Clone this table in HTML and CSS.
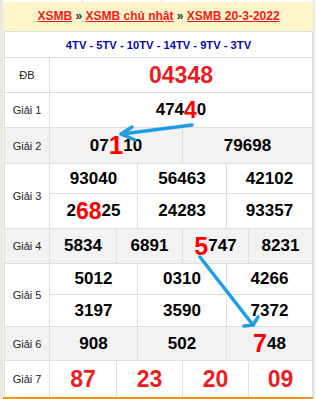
FILE: index.html
```html
<!DOCTYPE html>
<html lang="vi">
<head>
<meta charset="utf-8">
<title>XSMB 20-3-2022</title>
<link rel="stylesheet" href="styles.css">
</head>
<body>
<div class="page">
  <div class="prev"><span></span><span></span><span></span><span></span></div>
  <div class="box">
    <div class="title"><a href="#">XSMB</a> <span class="sep">»</span> <a href="#">XSMB chủ nhật</a> <span class="sep">»</span> <a href="#">XSMB 20-3-2022</a></div>
    <div class="grid">
      <div class="c codes">4TV - 5TV - 10TV - 14TV - 9TV - 3TV</div>

      <div class="c lbl r2">ĐB</div>
      <div class="c big s6">04348</div>

      <div class="c lbl r3">Giải 1</div>
      <div class="c num s6">474<span class="hl">4</span>0</div>

      <div class="c lbl alt r4">Giải 2</div>
      <div class="c num alt s3">07<span class="hl xl">1</span>10</div>
      <div class="c num alt s3">79698</div>

      <div class="c lbl r5">Giải 3</div>
      <div class="c num s2">93040</div>
      <div class="c num s2">56463</div>
      <div class="c num s2">42102</div>
      <div class="c num s2">2<span class="hl">68</span>25</div>
      <div class="c num s2">24283</div>
      <div class="c num s2">93357</div>

      <div class="c lbl alt r7">Giải 4</div>
      <div class="c num alt s1">5834</div>
      <div class="c num alt s2">6891</div>
      <div class="c num alt s2"><span class="hl lg">5</span>747</div>
      <div class="c num alt s1">8231</div>

      <div class="c lbl r8">Giải 5</div>
      <div class="c num s2">5012</div>
      <div class="c num s2">0310</div>
      <div class="c num s2">4266</div>
      <div class="c num s2">3197</div>
      <div class="c num s2">3590</div>
      <div class="c num s2">7372</div>

      <div class="c lbl alt r10">Giải 6</div>
      <div class="c num alt s2">908</div>
      <div class="c num alt s2">502</div>
      <div class="c num alt s2"><span class="hl lg">7</span>48</div>

      <div class="c lbl r11">Giải 7</div>
      <div class="c big s1">87</div>
      <div class="c big s2">23</div>
      <div class="c big s2">20</div>
      <div class="c big s1">09</div>
    </div>
  </div>
</div>
<svg class="arrows" width="316" height="399" viewBox="0 0 316 399" aria-hidden="true">
  <g stroke="#1e9de2" stroke-width="3.5" stroke-linecap="round" stroke-linejoin="round" fill="none">
    <line x1="192" y1="125" x2="122" y2="134"/>
    <polyline points="132,127 121,134 135,140"/>
    <line x1="200" y1="257" x2="253" y2="325"/>
    <polyline points="258,317 253,325 244,326"/>
  </g>
</svg>
</body>
</html>
```
FILE: styles.css
```css
html, body {
  margin: 0;
  padding: 0;
  background: #fff;
  font-family: "Liberation Sans", Arial, sans-serif;
}

.page {
  width: 310px;
  border-left: 3px solid #e8e8e8;
  border-right: 2px solid #e8e8e8;
}

.prev {
  height: 2px;
  display: flex;
  background: #fff;
}
.prev span {
  border-right: 1px solid #dddddd;
}
.prev span:nth-child(1) { width: 79px; }
.prev span:nth-child(2) { width: 78px; }
.prev span:nth-child(3) { width: 74px; }
.prev span:nth-child(4) { flex: 1; border-right: 0; }

.box {
  background: #fdf5c9;
  padding-left: 1px;
  border-bottom: 2px solid #f7941d;
}

.title {
  height: 29px;
  line-height: 29px;
  text-align: center;
  font-size: 12px;
  font-weight: bold;
  white-space: nowrap;
}
.title a {
  color: #ed1c24;
  text-decoration: underline;
}
.title .sep {
  color: #333;
}

.grid {
  display: grid;
  grid-template-columns: 44px 66px 20px 44px 43px 21px 63px;
  grid-template-rows: 25px 34px 34px 35px 29px 34px 34px 30px 31px 33px 36px;
  gap: 1px;
  padding: 1px 1px 0 1px;
  width: 309px;
  box-sizing: border-box;
  background: #dedede;
}

.c {
  background: #fff;
  display: flex;
  align-items: center;
  justify-content: center;
  white-space: nowrap;
}
.c.alt {
  background: #f2f2f2;
}

.codes {
  grid-column: 1 / -1;
  grid-row: 1;
  color: #0a0a9e;
  font-size: 11.2px;
  font-weight: bold;
}

.lbl {
  grid-column: 1;
  font-size: 11px;
  color: #222;
}
.r2 { grid-row: 2; }
.r3 { grid-row: 3; }
.r4 { grid-row: 4; }
.r5 { grid-row: 5 / span 2; }
.r7 { grid-row: 7; }
.r8 { grid-row: 8 / span 2; }
.r10 { grid-row: 10; }
.r11 { grid-row: 11; }

.s1 { grid-column: span 1; }
.s2 { grid-column: span 2; }
.s3 { grid-column: span 3; }
.s6 { grid-column: 2 / -1; }

.num {
  font-size: 17px;
  font-weight: bold;
  color: #000;
}

.big {
  font-size: 23px;
  font-weight: bold;
  color: #ed1c24;
}

.hl {
  color: #ff0000;
  font-size: 23px;
}
.hl.lg {
  font-size: 25px;
}
.hl.xl {
  font-size: 26px;
}

.arrows {
  position: absolute;
  left: 0;
  top: 0;
  pointer-events: none;
}
```
